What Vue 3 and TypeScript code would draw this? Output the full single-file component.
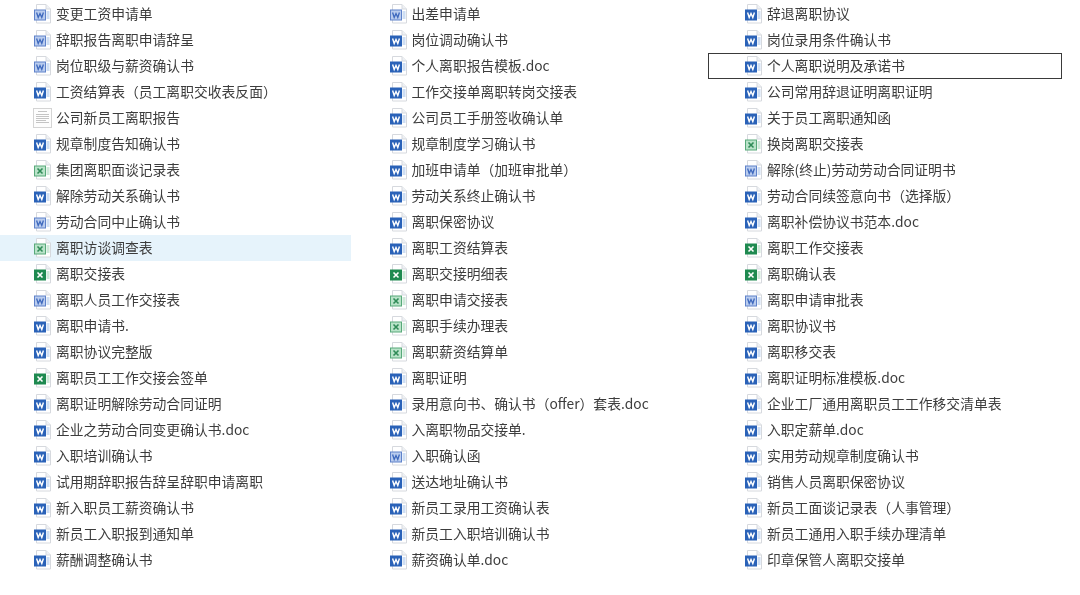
<script setup lang="ts">
type Kind = 'l' | 's' | 'xl' | 'xs' | 't'
interface Row { name: string; kind: Kind; state?: 'hover' | 'selected' }

const columns: Row[][] = [
  [
    { name: '变更工资申请单', kind: 'l' },
    { name: '辞职报告离职申请辞呈', kind: 'l' },
    { name: '岗位职级与薪资确认书', kind: 'l' },
    { name: '工资结算表（员工离职交收表反面）', kind: 's' },
    { name: '公司新员工离职报告', kind: 't' },
    { name: '规章制度告知确认书', kind: 's' },
    { name: '集团离职面谈记录表', kind: 'xl' },
    { name: '解除劳动关系确认书', kind: 's' },
    { name: '劳动合同中止确认书', kind: 'l' },
    { name: '离职访谈调查表', kind: 'xl', state: 'hover' },
    { name: '离职交接表', kind: 'xs' },
    { name: '离职人员工作交接表', kind: 'l' },
    { name: '离职申请书.', kind: 's' },
    { name: '离职协议完整版', kind: 's' },
    { name: '离职员工工作交接会签单', kind: 'xs' },
    { name: '离职证明解除劳动合同证明', kind: 's' },
    { name: '企业之劳动合同变更确认书.doc', kind: 's' },
    { name: '入职培训确认书', kind: 's' },
    { name: '试用期辞职报告辞呈辞职申请离职', kind: 's' },
    { name: '新入职员工薪资确认书', kind: 's' },
    { name: '新员工入职报到通知单', kind: 's' },
    { name: '薪酬调整确认书', kind: 's' },
  ],
  [
    { name: '出差申请单', kind: 'l' },
    { name: '岗位调动确认书', kind: 's' },
    { name: '个人离职报告模板.doc', kind: 's' },
    { name: '工作交接单离职转岗交接表', kind: 's' },
    { name: '公司员工手册签收确认单', kind: 's' },
    { name: '规章制度学习确认书', kind: 's' },
    { name: '加班申请单（加班审批单）', kind: 's' },
    { name: '劳动关系终止确认书', kind: 's' },
    { name: '离职保密协议', kind: 's' },
    { name: '离职工资结算表', kind: 's' },
    { name: '离职交接明细表', kind: 'xs' },
    { name: '离职申请交接表', kind: 'xl' },
    { name: '离职手续办理表', kind: 'xl' },
    { name: '离职薪资结算单', kind: 'xl' },
    { name: '离职证明', kind: 's' },
    { name: '录用意向书、确认书（offer）套表.doc', kind: 's' },
    { name: '入离职物品交接单.', kind: 's' },
    { name: '入职确认函', kind: 'l' },
    { name: '送达地址确认书', kind: 's' },
    { name: '新员工录用工资确认表', kind: 's' },
    { name: '新员工入职培训确认书', kind: 's' },
    { name: '薪资确认单.doc', kind: 's' },
  ],
  [
    { name: '辞退离职协议', kind: 's' },
    { name: '岗位录用条件确认书', kind: 's' },
    { name: '个人离职说明及承诺书', kind: 's', state: 'selected' },
    { name: '公司常用辞退证明离职证明', kind: 's' },
    { name: '关于员工离职通知函', kind: 's' },
    { name: '换岗离职交接表', kind: 'xl' },
    { name: '解除(终止)劳动劳动合同证明书', kind: 'l' },
    { name: '劳动合同续签意向书（选择版）', kind: 's' },
    { name: '离职补偿协议书范本.doc', kind: 's' },
    { name: '离职工作交接表', kind: 'xs' },
    { name: '离职确认表', kind: 'xs' },
    { name: '离职申请审批表', kind: 'l' },
    { name: '离职协议书', kind: 's' },
    { name: '离职移交表', kind: 's' },
    { name: '离职证明标准模板.doc', kind: 's' },
    { name: '企业工厂通用离职员工工作移交清单表', kind: 's' },
    { name: '入职定薪单.doc', kind: 's' },
    { name: '实用劳动规章制度确认书', kind: 's' },
    { name: '销售人员离职保密协议', kind: 's' },
    { name: '新员工面谈记录表（人事管理）', kind: 's' },
    { name: '新员工通用入职手续办理清单', kind: 's' },
    { name: '印章保管人离职交接单', kind: 's' },
  ],
]
</script>

<template>
  <div class="page">
    <div v-for="(col, c) in columns" :key="c" class="column">
      <div v-for="row in col" :key="row.name" class="row" :class="row.state">
        <svg v-if="row.kind === 't'" class="icon" width="21" height="20" viewBox="0 0 21 20">
          <rect x="1.5" y="0.5" width="18" height="19" fill="#fdfdfd" stroke="#d4d4d4" />
          <path d="M6 3.5h9M4 6.5h13M4 8.5h13M4 10.5h13M4 12.5h10M4 14.5h13" stroke="#c4c4c4" stroke-width="1" />
        </svg>
        <svg v-else class="icon" width="21" height="20" viewBox="0 0 21 20">
          <path d="M4.5 0.5H14L18.5 5V19H4.5Z" fill="#fff" stroke="#d6d9de" />
          <path d="M14 0.5V5H18.5" fill="#eef1f5" stroke="#d6d9de" />
          <path
            d="M14.5 8H17.5M14.5 10H17.5M14.5 12H17.5M14.5 14H17.5"
            :stroke="row.kind[0] === 'x' ? '#9dd2b3' : '#9dbde8'"
            stroke-width="1"
          />
          <rect
            x="2.5"
            y="6"
            width="11"
            height="10"
            :fill="{ l: '#b9ccee', s: '#2a62b8', xl: '#b9e3c9', xs: '#1f8a50' }[row.kind]"
            :stroke="{ l: '#5f82ca', s: '#2a62b8', xl: '#58a97a', xs: '#1f8a50' }[row.kind]"
          />
          <path
            v-if="row.kind === 's'"
            d="M4.6 8.5L6.2 13.5L8 9.5L9.8 13.5L11.4 8.5"
            fill="none"
            stroke="#fff"
            stroke-width="1.4"
          />
          <path
            v-else-if="row.kind === 'l'"
            d="M4.6 8.5L6.2 13.5L8 9.5L9.8 13.5L11.4 8.5"
            fill="none"
            stroke="#3d68bd"
            stroke-width="1.3"
          />
          <path
            v-else
            d="M5.5 8.5L10.5 13.5M10.5 8.5L5.5 13.5"
            fill="none"
            :stroke="row.kind === 'xs' ? '#fff' : '#2f8b57'"
            stroke-width="1.6"
          />
        </svg>
        <span class="name">{{ row.name }}</span>
      </div>
    </div>
  </div>
</template>

<style scoped>
.page {
  width: 1080px;
  height: 595px;
  box-sizing: border-box;
  padding-top: 1px;
  display: grid;
  grid-template-columns: 355.5px 355.5px 369px;
  background: #fff;
  overflow: hidden;
}
.column {
  display: flex;
  flex-direction: column;
}
.row {
  width: 351px;
  height: 26px;
  box-sizing: border-box;
  padding-left: 32px;
  display: flex;
  align-items: center;
  font-family: "Noto Sans CJK SC", "Noto Sans", sans-serif;
  font-size: 13.8px;
  color: #3c3c3c;
  white-space: nowrap;
}
.icon {
  flex: none;
  margin-right: 3px;
  filter: blur(0.4px);
}
.name {
  margin-bottom: 2px;
  filter: blur(0.25px);
}
.row.hover {
  background: #e6f3fb;
}
.row.selected {
  width: 354px;
  margin-left: -3px;
  padding-left: 34px;
  border: 1px solid #3a3a3a;
}
</style>
